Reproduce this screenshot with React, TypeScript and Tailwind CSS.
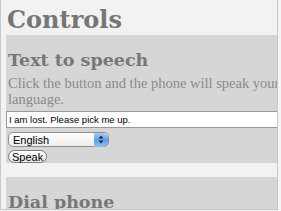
import {useState} from 'react';

const serif = "font-['DejaVu_Serif',Georgia,serif]";
const bodySerif = "font-['Liberation_Serif',Georgia,serif]";
const sans = "font-['Liberation_Sans','Lucida_Grande',Arial,sans-serif]";

function SelectArrows() {
    return (
        <span className="flex h-[14px] w-[14px] items-center justify-center rounded-r-[5px] bg-gradient-to-b from-[#a9cdf3] via-[#5e9ee6] to-[#8fc2f3]">
            <svg width="6" height="9" viewBox="0 0 6 9">
                <path d="M3 0.5 L5.5 3.5 L0.5 3.5 Z" fill="#1b2a3d" />
                <path d="M3 8.5 L5.5 5.5 L0.5 5.5 Z" fill="#1b2a3d" />
            </svg>
        </span>
    );
}

export default function App() {
    const [text, setText] = useState('I am lost. Please pick me up.');

    return (
        <div className="h-[211px] w-[281px] overflow-hidden bg-[#f4f4f4]">
            <div className="h-[210px] w-[278px] overflow-hidden border-r border-b border-l border-[#c9c9c9] bg-[#f2f2f2] pl-[5px]">
                <h1 className={`${serif} pt-[4px] pl-[1px] text-[24px] leading-[31px] font-bold text-[#767676]`}>
                    Controls
                </h1>

                <section className="h-[128px] w-[271px] bg-[#d6d6d6] pl-[2px]">
                    <h2 className={`${serif} pt-[15px] text-[17.5px] leading-[21px] font-bold whitespace-nowrap text-[#777]`}>
                        Text to speech
                    </h2>
                    <p className={`${bodySerif} mt-[4px] w-[420px] text-[14.5px] leading-[16px] text-[#8a8a8a]`}>
                        Click the button and the phone will speak your request in the selected
                        <br />
                        language.
                    </p>
                    <input
                        value={text}
                        onChange={(event) => setText(event.target.value)}
                        className={`${sans} -ml-[2px] mt-[4px] block h-[17px] w-[272px] border border-[#9a9a9a] border-r-[#d0d0d0] bg-white px-[2px] text-[9.5px] text-black outline-none`}
                    />
                    <div className="mt-[4px] flex h-[15px] w-[101px] items-center justify-between rounded-[5px] border border-[#8f8f8f] bg-gradient-to-b from-white to-[#ececec] pl-[4px]">
                        <span className={`${sans} text-[11px] leading-[12px] text-black`}>English</span>
                        <SelectArrows />
                    </div>
                    <button
                        type="button"
                        className={`${sans} mt-[3px] flex h-[13px] items-center rounded-full border border-[#7d7d7d] bg-gradient-to-b from-white to-[#e8e8e8] px-[3px] text-[11px] leading-[12px] text-black`}
                    >
                        Speak
                    </button>
                </section>

                <div className="h-[14px]" />

                <section className="h-[40px] w-[271px] bg-[#d6d6d6] pl-[2px]">
                    <h2 className={`${serif} pt-[15px] text-[17.5px] leading-[21px] font-bold whitespace-nowrap text-[#777]`}>
                        Dial phone
                    </h2>
                </section>
            </div>
        </div>
    );
}
